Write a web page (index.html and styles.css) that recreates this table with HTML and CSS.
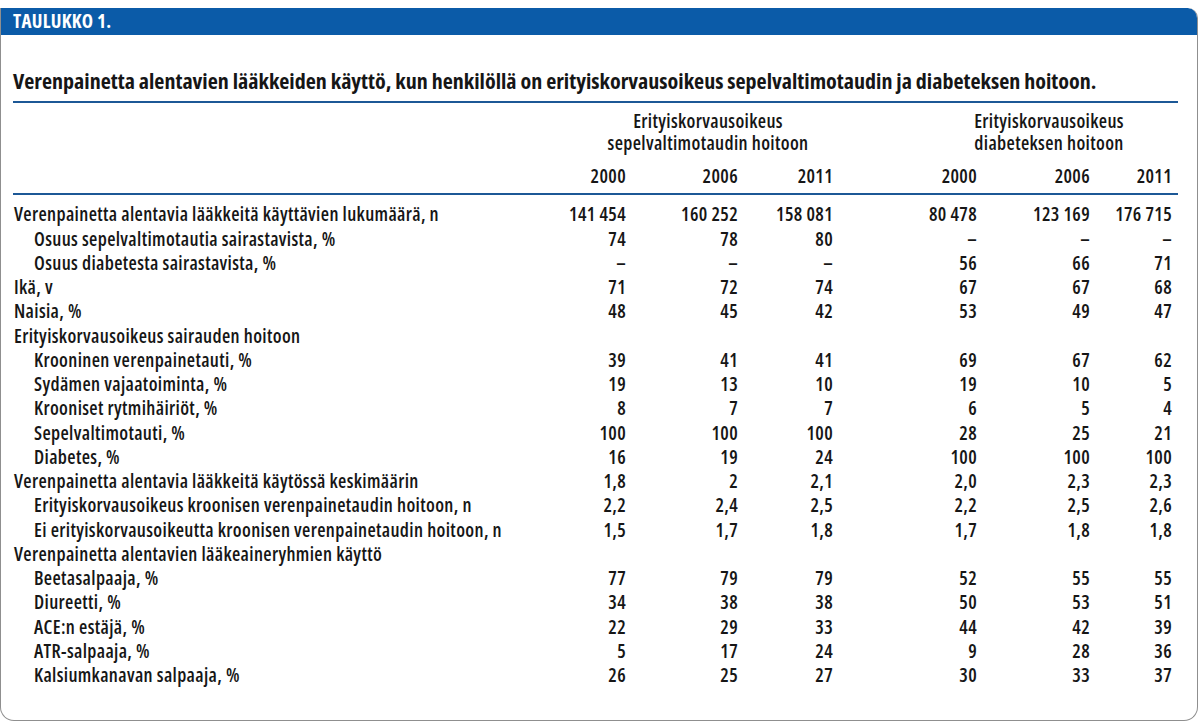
FILE: index.html
```html
<!DOCTYPE html>
<html lang="fi">
<head>
<meta charset="utf-8">
<title>Taulukko 1</title>
<link rel="stylesheet" href="styles.css">
</head>
<body>
<div class="panel">
  <div class="bar">TAULUKKO 1.</div>
  <div class="content">
    <h1 class="title">Verenpainetta alentavien lääkkeiden käyttö, kun henkilöllä on erityiskorvausoikeus sepelvaltimotaudin ja diabeteksen hoitoon.</h1>
    <table class="data">
      <colgroup>
        <col class="c-label"><col class="c1"><col class="c2"><col class="c3"><col class="c4"><col class="c5"><col class="c6">
      </colgroup>
      <thead>
        <tr class="group">
          <th></th>
          <th colspan="3" class="g1">Erityiskorvausoikeus<br>sepelvaltimotaudin hoitoon</th>
          <th colspan="3" class="g2">Erityiskorvausoikeus<br>diabeteksen hoitoon</th>
        </tr>
        <tr class="years">
          <th></th>
          <th>2000</th><th>2006</th><th>2011</th><th>2000</th><th>2006</th><th>2011</th>
        </tr>
      </thead>
      <tbody>
        <tr class="first"><td>Verenpainetta alentavia lääkkeitä käyttävien lukumäärä, n</td><td>141 454</td><td>160 252</td><td>158 081</td><td>80 478</td><td>123 169</td><td>176 715</td></tr>
        <tr><td class="ind">Osuus sepelvaltimotautia sairastavista, %</td><td>74</td><td>78</td><td>80</td><td>–</td><td>–</td><td>–</td></tr>
        <tr><td class="ind">Osuus diabetesta sairastavista, %</td><td>–</td><td>–</td><td>–</td><td>56</td><td>66</td><td>71</td></tr>
        <tr><td>Ikä, v</td><td>71</td><td>72</td><td>74</td><td>67</td><td>67</td><td>68</td></tr>
        <tr><td>Naisia, %</td><td>48</td><td>45</td><td>42</td><td>53</td><td>49</td><td>47</td></tr>
        <tr><td>Erityiskorvausoikeus sairauden hoitoon</td><td></td><td></td><td></td><td></td><td></td><td></td></tr>
        <tr><td class="ind">Krooninen verenpainetauti, %</td><td>39</td><td>41</td><td>41</td><td>69</td><td>67</td><td>62</td></tr>
        <tr><td class="ind">Sydämen vajaatoiminta, %</td><td>19</td><td>13</td><td>10</td><td>19</td><td>10</td><td>5</td></tr>
        <tr><td class="ind">Krooniset rytmihäiriöt, %</td><td>8</td><td>7</td><td>7</td><td>6</td><td>5</td><td>4</td></tr>
        <tr><td class="ind">Sepelvaltimotauti, %</td><td>100</td><td>100</td><td>100</td><td>28</td><td>25</td><td>21</td></tr>
        <tr><td class="ind">Diabetes, %</td><td>16</td><td>19</td><td>24</td><td>100</td><td>100</td><td>100</td></tr>
        <tr><td>Verenpainetta alentavia lääkkeitä käytössä keskimäärin</td><td>1,8</td><td>2</td><td>2,1</td><td>2,0</td><td>2,3</td><td>2,3</td></tr>
        <tr><td class="ind">Erityiskorvausoikeus kroonisen verenpainetaudin hoitoon, n</td><td>2,2</td><td>2,4</td><td>2,5</td><td>2,2</td><td>2,5</td><td>2,6</td></tr>
        <tr><td class="ind">Ei erityiskorvausoikeutta kroonisen verenpainetaudin hoitoon, n</td><td>1,5</td><td>1,7</td><td>1,8</td><td>1,7</td><td>1,8</td><td>1,8</td></tr>
        <tr><td>Verenpainetta alentavien lääkeaineryhmien käyttö</td><td></td><td></td><td></td><td></td><td></td><td></td></tr>
        <tr><td class="ind">Beetasalpaaja, %</td><td>77</td><td>79</td><td>79</td><td>52</td><td>55</td><td>55</td></tr>
        <tr><td class="ind">Diureetti, %</td><td>34</td><td>38</td><td>38</td><td>50</td><td>53</td><td>51</td></tr>
        <tr><td class="ind">ACE:n estäjä, %</td><td>22</td><td>29</td><td>33</td><td>44</td><td>42</td><td>39</td></tr>
        <tr><td class="ind">ATR-salpaaja, %</td><td>5</td><td>17</td><td>24</td><td>9</td><td>28</td><td>36</td></tr>
        <tr><td class="ind">Kalsiumkanavan salpaaja, %</td><td>26</td><td>25</td><td>27</td><td>30</td><td>33</td><td>37</td></tr>
      </tbody>
    </table>
  </div>
</div>
</body>
</html>
```
FILE: styles.css
```css
html, body {
  margin: 0;
  padding: 0;
  background: #ffffff;
}
body {
  padding-top: 8px;
  font-family: "Open Sans", "DejaVu Sans", sans-serif;
  font-stretch: 75%;
  color: #161616;
}
.panel {
  box-sizing: border-box;
  width: 1198px;
  height: 713px;
  border: 1px solid #8f8f8f;
  border-top: none;
  border-radius: 0 10px 14px 14px;
  overflow: hidden;
}
.bar {
  height: 27px;
  line-height: 27px;
  background: #0b5ba8;
  color: #ffffff;
  font-weight: 700;
  font-size: 19px;
  letter-spacing: 0.3px;
  padding-left: 13px;
  border-radius: 0 10px 0 0;
  margin: 0 -1px;
}
.content {
  padding: 0 0 0 12px;
}
.title {
  box-sizing: border-box;
  margin: 0;
  padding-top: 32px;
  height: 68px;
  font-size: 22px;
  line-height: 26px;
  font-weight: 700;
  white-space: nowrap;
  border-bottom: 2px solid #1c5896;
  width: 1165px;
}
.data {
  border-collapse: collapse;
  width: 1165px;
  table-layout: fixed;
  font-size: 19px;
  letter-spacing: 0.35px;
  font-weight: 600;
}
.c-label { width: 507px; }
.c1 { width: 112px; }
.c2 { width: 112px; }
.c3 { width: 95px; }
.c4 { width: 144px; }
.c5 { width: 113px; }
.c6 { width: 82px; }
.data th, .data td {
  padding: 0 6px 0 0;
  text-align: right;
  white-space: nowrap;
  line-height: 24.25px;
}
.data th {
  font-weight: 600;
}
.data td:first-child {
  text-align: left;
  padding-left: 1px;
}
.data td.ind {
  padding-left: 21px;
}
.group th {
  line-height: 22px;
  padding-top: 7px;
  text-align: center;
}
.group th.g1 { padding-left: 57px; padding-right: 0; }
.group th.g2 { padding-left: 81px; padding-right: 0; }
.years th {
  padding-top: 10px;
  padding-bottom: 5px;
  border-bottom: 2px solid #1c5896;
}
.first td {
  padding-top: 7px;
}
```
